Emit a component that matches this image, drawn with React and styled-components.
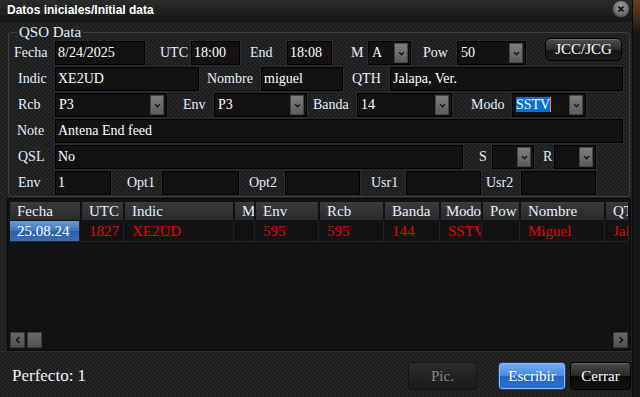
import styled, { createGlobalStyle } from "styled-components";

const GlobalStyle = createGlobalStyle`
  html, body {
    margin: 0;
    padding: 0;
  }
  body {
    width: 640px;
    height: 397px;
    overflow: hidden;
    background: linear-gradient(to bottom, #6b3f1c 0, #3a2414 22px, #161616 34px, #161616 100%);
    font-family: "Liberation Serif", "Times New Roman", serif;
  }
`;

const carbon = `
  background-color: #1d1d1d;
  background-image:
    linear-gradient(45deg, #262626 25%, transparent 25%, transparent 75%, #262626 75%),
    linear-gradient(45deg, #262626 25%, transparent 25%, transparent 75%, #262626 75%);
  background-size: 4px 4px;
  background-position: 0 0, 2px 2px;
`;

const Window = styled.div`
  width: 632px;
  height: 397px;
  display: flex;
  flex-direction: column;
  background: #181818;
  box-shadow: 1px 0 0 #0a0a0a;
`;

const TitleBar = styled.div`
  height: 22px;
  flex: none;
  display: flex;
  justify-content: space-between;
  padding: 0 3px 0 7px;
  background: linear-gradient(to bottom, #2b2b2b, #161616);
`;

const Title = styled.div`
  font-family: "Liberation Sans", Arial, sans-serif;
  font-weight: bold;
  font-size: 12px;
  line-height: 20px;
  color: #fff;
`;

const CloseButton = styled.div`
  width: 16px;
  height: 16px;
  margin-top: 1px;
  border-radius: 50%;
  background: radial-gradient(circle at 50% 35%, #a8a8a8, #5c5c5c 75%);
  box-shadow: 0 0 0 1px #2a2a2a;
  display: flex;
  align-items: center;
  justify-content: center;
`;

const Body = styled.div`
  ${carbon}
  flex: 1;
  display: flex;
  flex-direction: column;
  gap: 2px;
  padding: 2px 2px 1px 8px;
  min-height: 0;
`;

const GroupBox = styled.fieldset`
  margin: 0;
  padding: 0 0 1px 0;
  border: 1px solid #3e3e3e;
  border-radius: 4px;
  min-width: 0;
  display: flex;
  flex-direction: column;
  gap: 2px;
`;

const Legend = styled.legend`
  margin-left: 8px;
  padding: 0 2px;
  font-size: 15px;
  line-height: 17px;
  color: #e6eeff;
`;

const Row = styled.div`
  height: 24px;
  display: flex;
  align-items: center;
`;

const Label = styled.div`
  flex: none;
  width: ${(p) => p.$w}px;
  margin-left: ${(p) => p.$ml || 0}px;
  font-size: 14px;
  color: #e6eeff;
  white-space: nowrap;
`;

const Field = styled.div`
  flex: none;
  box-sizing: border-box;
  width: ${(p) => p.$w}px;
  height: 24px;
  padding: 0 2px;
  background: #121212;
  border: 1px solid #020202;
  box-shadow: 0 0 0 1px #2a2a2a;
  font-size: 14px;
  line-height: 22px;
  color: #fff;
  white-space: nowrap;
  overflow: hidden;
`;

const ComboBox = styled(Field)`
  display: flex;
  align-items: center;
  justify-content: space-between;
  padding: 0 2px 0 3px;
`;

const Selected = styled.span`
  background: #0a6fd4;
  color: #fff;
  line-height: 16px;
  border-right: 1px solid #ff8a1a;
`;

const DropButton = styled.div`
  flex: none;
  width: 14px;
  height: 20px;
  border-radius: 2px;
  background: linear-gradient(to bottom, #808080, #5a5a5a);
  box-shadow: inset 0 0 0 1px #444;
  display: flex;
  align-items: center;
  justify-content: center;
`;

const ActionButton = styled.div`
  flex: none;
  align-self: flex-start;
  margin: -3px 0 0 19px;
  box-sizing: border-box;
  width: 77px;
  height: 23px;
  border: 1px solid #000;
  border-radius: 6px;
  background: linear-gradient(to bottom, #505050, #2a2a2a 50%, #141414 51%, #1c1c1c);
  box-shadow: inset 0 1px 0 #6a6a6a;
  color: #fff;
  font-size: 15px;
  line-height: 21px;
  text-align: center;
`;

const Grid = styled.div`
  flex: 1;
  display: flex;
  flex-direction: column;
  padding: 2px;
  background: #121212;
  box-shadow: 0 0 0 1px #0a0a0a;
  min-height: 0;
`;

const columns = "70px 41px 108px 19px 62px 63px 54px 40px 36px 83px 1fr";

const HeaderRow = styled.div`
  display: grid;
  grid-template-columns: ${columns};
  column-gap: 2px;
  height: 18px;
  margin-top: 1px;
`;

const HeaderCell = styled.div`
  background: linear-gradient(to bottom, #3a3a3a, #2a2a2a);
  color: #e6eeff;
  font-size: 15px;
  line-height: 18px;
  padding-left: ${(p) => (p.$tight ? 5 : 7)}px;
  letter-spacing: ${(p) => (p.$tight ? "-0.3px" : "0")};
  white-space: nowrap;
  overflow: hidden;
`;

const DataRow = styled.div`
  display: grid;
  grid-template-columns: ${columns};
  column-gap: 2px;
  height: 21px;
  border-bottom: 1px solid #242424;
`;

const DataCell = styled.div`
  color: ${(p) => (p.$sel ? "#fff" : "#e80000")};
  font-size: 15px;
  line-height: 20px;
  padding-left: 7px;
  margin-top: 1px;
  white-space: nowrap;
  overflow: hidden;
  box-shadow: 1px 0 0 #232323;
  background: ${(p) =>
    p.$sel ? "linear-gradient(to bottom, #6a9ad8, #3f74bd 50%, #2c5fa8 51%, #3a6fb8)" : "transparent"};
  ${(p) => p.$sel && "margin-right: 1px;"}
`;

const Spacer = styled.div`
  flex: 1;
`;

const ScrollBar = styled.div`
  height: 16px;
  display: flex;
  gap: 2px;
`;

const ScrollPart = styled.div`
  width: 15px;
  height: 16px;
  border-radius: 2px;
  background: linear-gradient(to bottom, #6c6c6c, #4e4e4e);
  box-shadow: inset 0 0 0 1px #3a3a3a;
  display: flex;
  align-items: center;
  justify-content: center;
  ${(p) => p.$end && "margin-left: auto;"}
`;

const Footer = styled.div`
  ${carbon}
  height: 46px;
  flex: none;
  display: flex;
  align-items: center;
  padding: 0 1px 2px 12px;
  box-sizing: border-box;
  border-top: 1px solid #2c2c2c;
`;

const Status = styled.div`
  flex: 1;
  font-size: 17px;
  color: #f0f4ff;
  padding-top: 4px;
`;

const FooterButton = styled.div`
  box-sizing: border-box;
  width: ${(p) => p.$w}px;
  height: 28px;
  margin-left: ${(p) => p.$ml}px;
  margin-top: 4px;
  border-radius: 4px;
  font-size: 15px;
  line-height: 26px;
  text-align: center;
  ${(p) =>
    p.$kind === "disabled"
      ? `
    background: linear-gradient(to bottom, #2c2c2c, #222 50%, #1b1b1b);
    border: 1px solid #161616;
    color: #8a8a8a;
  `
      : p.$kind === "primary"
      ? `
    background: linear-gradient(to bottom, #7ab0ee, #4a8ae0 48%, #2466c4 52%, #2c70cc);
    border: 1px solid #1a3f78;
    box-shadow: inset 0 0 0 1px #8cbcf2;
    color: #fff;
  `
      : `
    background: linear-gradient(to bottom, #4a4a4a, #2a2a2a 48%, #0a0a0a 52%, #141414);
    border: 1px solid #000;
    box-shadow: inset 0 1px 0 #666;
    color: #fff;
  `}
`;

const Chevron = () => (
  <svg width="7" height="5" viewBox="0 0 7 5">
    <path d="M1 1.2 L3.5 3.6 L6 1.2" fill="none" stroke="#1a1a1a" strokeWidth="1.5" />
  </svg>
);

const Arrow = ({ dir }) => (
  <svg width="6" height="8" viewBox="0 0 6 8">
    <path
      d={dir === "left" ? "M4.5 1 L1.5 4 L4.5 7" : "M1.5 1 L4.5 4 L1.5 7"}
      fill="none"
      stroke="#111"
      strokeWidth="1.6"
    />
  </svg>
);

const Combo = ({ w, children }) => (
  <ComboBox $w={w}>
    <span>{children}</span>
    <DropButton>
      <Chevron />
    </DropButton>
  </ComboBox>
);

const headers = ["Fecha", "UTC", "Indic", "M", "Env", "Rcb", "Banda", "Modo", "Pow", "Nombre", "QTH"];
const record = ["25.08.24", "1827", "XE2UD", "", "595", "595", "144", "SSTV", "", "Miguel", "Jalapa, Ver."];

export default function App() {
  return (
    <>
      <GlobalStyle />
      <Window>
        <TitleBar>
          <Title>Datos iniciales/Initial data</Title>
          <CloseButton>
            <svg width="8" height="8" viewBox="0 0 8 8">
              <path d="M1.5 1.5 L6.5 6.5 M6.5 1.5 L1.5 6.5" stroke="#1a1a1a" strokeWidth="1.8" />
            </svg>
          </CloseButton>
        </TitleBar>
        <Body>
          <GroupBox>
            <Legend>QSO Data</Legend>
            <Row>
              <Label $ml={5} $w={41}>Fecha</Label>
              <Field $w={90}>8/24/2025</Field>
              <Label $ml={15} $w={31}>UTC</Label>
              <Field $w={49}>18:00</Field>
              <Label $ml={10} $w={37}>End</Label>
              <Field $w={45}>18:08</Field>
              <Label $ml={19} $w={17}>M</Label>
              <Combo w={43}>A</Combo>
              <Label $ml={12} $w={34}>Pow</Label>
              <Combo w={69}>50</Combo>
              <ActionButton>JCC/JCG</ActionButton>
            </Row>
            <Row>
              <Label $ml={9} $w={37}>Indic</Label>
              <Field $w={144}>XE2UD</Field>
              <Label $ml={8} $w={54}>Nombre</Label>
              <Field $w={82}>miguel</Field>
              <Label $ml={9} $w={38}>QTH</Label>
              <Field $w={233}>Jalapa, Ver.</Field>
            </Row>
            <Row>
              <Label $ml={9} $w={37}>Rcb</Label>
              <Combo w={112}>P3</Combo>
              <Label $ml={16} $w={31}>Env</Label>
              <Combo w={93}>P3</Combo>
              <Label $ml={6} $w={44}>Banda</Label>
              <Combo w={95}>14</Combo>
              <Label $ml={19} $w={41}>Modo</Label>
              <Combo w={74}>
                <Selected>SSTV</Selected>
              </Combo>
            </Row>
            <Row>
              <Label $ml={8} $w={38}>Note</Label>
              <Field $w={568}>Antena End feed</Field>
            </Row>
            <Row>
              <Label $ml={9} $w={37}>QSL</Label>
              <Field $w={408}>No</Field>
              <Label $ml={16} $w={13}>S</Label>
              <Combo w={42} />
              <Label $ml={9} $w={11}>R</Label>
              <Combo w={42} />
            </Row>
            <Row>
              <Label $ml={9} $w={37}>Env</Label>
              <Field $w={56}>1</Field>
              <Label $ml={16} $w={35}>Opt1</Label>
              <Field $w={77} />
              <Label $ml={10} $w={36}>Opt2</Label>
              <Field $w={75} />
              <Label $ml={11} $w={35}>Usr1</Label>
              <Field $w={75} />
              <Label $ml={5} $w={35}>Usr2</Label>
              <Field $w={75} />
            </Row>
          </GroupBox>
          <Grid>
            <HeaderRow>
              {headers.map((h) => (
                <HeaderCell key={h} $tight={h === "Modo"}>
                  {h}
                </HeaderCell>
              ))}
            </HeaderRow>
            <DataRow>
              {record.map((v, i) => (
                <DataCell key={i} $sel={i === 0}>
                  {v}
                </DataCell>
              ))}
            </DataRow>
            <Spacer />
            <ScrollBar>
              <ScrollPart>
                <Arrow dir="left" />
              </ScrollPart>
              <ScrollPart />
              <ScrollPart $end>
                <Arrow dir="right" />
              </ScrollPart>
            </ScrollBar>
          </Grid>
        </Body>
        <Footer>
          <Status>Perfecto: 1</Status>
          <FooterButton $kind="disabled" $w={69} $ml={0}>Pic.</FooterButton>
          <FooterButton $kind="primary" $w={68} $ml={21}>Escribir</FooterButton>
          <FooterButton $w={61} $ml={4}>Cerrar</FooterButton>
        </Footer>
      </Window>
    </>
  );
}
